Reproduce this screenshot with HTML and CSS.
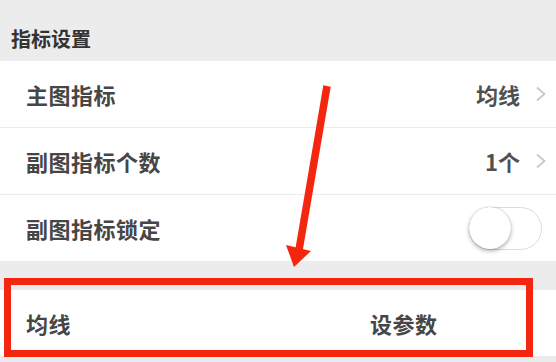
FILE: index.html
```html
<!DOCTYPE html>
<html lang="zh-CN">
<head>
  <meta charset="UTF-8" />
  <title>指标设置</title>
  <link rel="stylesheet" href="styles.css">
</head>
<body>

  <div class="section-title">指标设置</div>

  <div class="list">
    <div class="row">
      <span class="label">主图指标</span>
      <span class="value">均线</span>
      <svg class="chevron" width="12" height="16" viewBox="0 0 12 16">
        <path d="M2 1.5 L9.5 8 L2 14.5" fill="none" stroke="#c9c9cc" stroke-width="1.8" />
      </svg>
    </div>
    <div class="row">
      <span class="label">副图指标个数</span>
      <span class="value">1个</span>
      <svg class="chevron" width="12" height="16" viewBox="0 0 12 16">
        <path d="M2 1.5 L9.5 8 L2 14.5" fill="none" stroke="#c9c9cc" stroke-width="1.8" />
      </svg>
    </div>
    <div class="row">
      <span class="label">副图指标锁定</span>
      <div class="switch"><div class="knob"></div></div>
    </div>
  </div>

  <div class="list second">
    <div class="row param-row">
      <span class="label">均线</span>
      <span class="label">设参数</span>
    </div>
  </div>

  <!-- annotation drawn over the screenshot -->
  <div class="highlight"></div>
  <svg class="arrow" width="556" height="362" viewBox="0 0 556 362">
    <line x1="327" y1="86" x2="299" y2="250" stroke="#f5260f" stroke-width="7.5" />
    <polygon points="286,245 311,251 294,267" fill="#f5260f" />
  </svg>

</body>
</html>
```

FILE: styles.css
```css
body {
  margin: 0;
  background-color: #ececec;
  font-family: "Noto Sans CJK SC", "Noto Sans", sans-serif;
  position: relative;
  height: 362px;
  overflow: hidden;
}

.section-title {
  height: 61px;
  box-sizing: border-box;
  padding: 0 0 8px 11px;
  display: flex;
  align-items: flex-end;
  font-size: 20px;
  font-weight: bold;
  color: #333;
}

.list {
  background: white;
}

.list.second {
  margin-top: 29px;
}

.row {
  height: 66px;
  display: flex;
  align-items: center;
  padding: 0 9px 0 26px;
  border-bottom: 1px solid #ebebeb;
}

.list .row:last-child {
  border-bottom: none;
}

.list.second .row {
  height: 66px;
  border-bottom: 1px solid #ebebeb;
}

.label {
  font-size: 22px;
  font-weight: bold;
  color: #464646;
  letter-spacing: 0.5px;
}

.value {
  margin-left: auto;
  font-size: 22px;
  font-weight: bold;
  color: #505050;
  margin-right: 15px;
}

.switch {
  margin-left: auto;
  margin-right: 5px;
  width: 73px;
  height: 43px;
  box-sizing: border-box;
  border: 1.5px solid #dcdcdc;
  border-radius: 22px;
  background: white;
  position: relative;
}

.knob {
  position: absolute;
  left: -1px;
  top: -1px;
  width: 42px;
  height: 42px;
  border-radius: 50%;
  background: white;
  box-shadow: 0 2px 4px rgba(0,0,0,0.3), 0 0 1px rgba(0,0,0,0.3);
}

.param-row {
  display: grid;
  grid-template-columns: 344px 1fr;
}

.highlight {
  position: absolute;
  left: 4px;
  top: 278px;
  width: 529px;
  height: 79px;
  box-sizing: border-box;
  border: 7px solid #f5260f;
}

.arrow {
  position: absolute;
  left: 0;
  top: 0;
}
```
